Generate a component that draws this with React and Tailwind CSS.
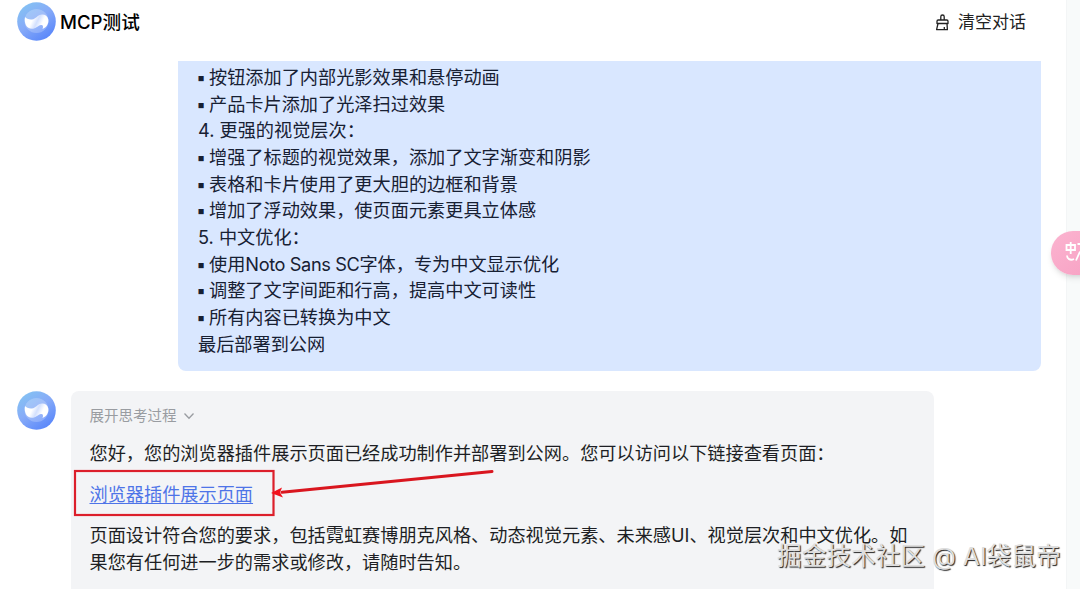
import React from 'react';

const promptLines = [
  { bullet: true, text: '按钮添加了内部光影效果和悬停动画' },
  { bullet: true, text: '产品卡片添加了光泽扫过效果' },
  { text: '4. 更强的视觉层次：' },
  { bullet: true, text: '增强了标题的视觉效果，添加了文字渐变和阴影' },
  { bullet: true, text: '表格和卡片使用了更大胆的边框和背景' },
  { bullet: true, text: '增加了浮动效果，使页面元素更具立体感' },
  { text: '5. 中文优化：' },
  { bullet: true, text: <>使用<span className="tracking-[-0.38px]">Noto Sans SC</span>字体，专为中文显示优化</> },
  { bullet: true, text: '调整了文字间距和行高，提高中文可读性' },
  { bullet: true, text: '所有内容已转换为中文' },
  { text: '最后部署到公网' },
];

const Avatar = ({ id }) => (
  <svg className="size-[39px] shrink-0" viewBox="0 0 39 39">
    <defs>
      <linearGradient id={`${id}-bg`} x1="0.15" y1="0.1" x2="0.75" y2="0.95">
        <stop offset="0" stopColor="#84c0f3" />
        <stop offset="0.45" stopColor="#87abf8" />
        <stop offset="1" stopColor="#5b88fa" />
      </linearGradient>
      <linearGradient id={`${id}-s`} x1="0" y1="0.35" x2="1" y2="0.65">
        <stop offset="0.3" stopColor="#ffffff" />
        <stop offset="0.52" stopColor="#d3e0fe" />
        <stop offset="0.75" stopColor="#ffffff" />
      </linearGradient>
    </defs>
    <circle cx="19.5" cy="19.5" r="19.3" fill={`url(#${id}-bg)`} />
    <circle cx="19.5" cy="19" r="12" fill="#ffffff" opacity="0.22" />
    <path
      d="M8 15C6.800 21 9.500 26.800 15 26.800C19 26.800 21 23.500 24 23C26 22.800 26.500 24.500 25.500 27C29.500 25.500 32 21.500 31.300 17.500C30.600 14 28 12.300 25 12.500C20.500 12.800 19 17 15 17.500C11.500 17.800 9.500 16.500 8 15Z"
      fill={`url(#${id}-s)`}
    />
  </svg>
);

const BroomIcon = () => (
  <svg className="h-[17px] w-[15px]" viewBox="0 0 15 17" fill="none" stroke="#222" strokeWidth="1.3" strokeLinejoin="round">
    <path d="M5.800 6V2.700a1.700 1.700 0 0 1 3.400 0V6" />
    <path d="M3.200 6h8.600q1.200 0 1.200 1.200v2.300H2V7.200Q2 6 3.200 6z" />
    <path d="M3 9.500L1.600 15.700h10.800l-.4-6.200M9.300 15.700v-2.600" />
  </svg>
);

const App = () => {
  return (
    <div
      lang="zh-CN"
      className="relative flex h-[589px] w-[1080px] overflow-hidden bg-white font-[Inter,'Noto_Sans_CJK_SC',sans-serif] text-[18.18px] leading-[26.7px] text-[#1d1f24]"
    >
      <div className="flex w-[1066px] shrink-0 flex-col">
        <header className="flex h-[61px] shrink-0 items-start justify-between pt-0.5 pr-10 pl-[17px]">
          <div className="flex items-center gap-1">
            <Avatar id="head" />
            <h1 className="pt-0.5 text-[18.6px] font-medium text-black">MCP测试</h1>
          </div>
          <button className="flex h-10 items-center gap-2 text-[17px] text-[#222]">
            <BroomIcon />
            清空对话
          </button>
        </header>

        <main className="flex grow flex-col gap-5">
          <div className="ml-[178px] h-[310px] w-[863px] shrink-0 rounded-b-lg bg-[#d9e7ff] px-5 pt-[2.8px] text-[#172033]">
            {promptLines.map((line, index) => (
              <p key={index} className="flex">
                {line.bullet && <span className="-ml-0.5 w-[13px] shrink-0">▪</span>}
                <span>{line.text}</span>
              </p>
            ))}
          </div>

          <div className="flex gap-[15px] pl-[17px]">
            <Avatar id="reply" />
            <div className="h-[198px] w-[863px] rounded-t-lg bg-[#f3f4f6] pt-3 pr-5 pl-[18.5px]">
              <button className="flex items-center gap-1.5 text-[14.5px] text-[#999ca1]">
                展开思考过程
                <svg className="h-3 w-3" viewBox="0 0 12 12" fill="none" stroke="currentColor" strokeWidth="1.3">
                  <path d="M1.500 3.500L6 8.300l4.500-4.800" />
                </svg>
              </button>
              <p className="mt-2.5">
                您好，您的浏览器插件展示页面已经成功制作并部署到公网。您可以访问以下链接查看页面：
              </p>
              <p className="mt-[15px]">
                <a href="#" className="text-[#4e74e8] underline underline-offset-2">浏览器插件展示页面</a>
              </p>
              <p className="mt-[14px]">
                页面设计符合您的要求，包括霓虹赛博朋克风格、动态视觉元素、未来感UI、视觉层次和中文优化。如
                <br />
                果您有任何进一步的需求或修改，请随时告知。
              </p>
            </div>
          </div>
        </main>
      </div>

      <aside className="grow border-l border-[#f3f5f6] bg-[#f8fafa]" />

      {/* translate button docked at the right edge */}
      <button className="absolute top-[231px] left-[1051px] h-11 w-14 rounded-l-full bg-gradient-to-br from-[#fbb4d0] to-[#f79fc2] shadow-md">
        <svg className="absolute top-2.5 left-[14px] h-6 w-5" viewBox="0 0 20 24" fill="none" stroke="#fff" strokeWidth="1.8">
          <path d="M1.500 4h8.500v5H1.500zM5.700 1v12M12.500 3h6M2 14.500c0 3 3 5.500 7 3.500M11 19.500l4-9" />
        </svg>
      </button>

      {/* highlight box and arrow over the link */}
      <svg className="pointer-events-none absolute top-[460px] left-[70px]" width="430" height="60" viewBox="0 0 430 60">
        <rect x="5" y="11" width="198.500" height="44" fill="none" stroke="#dc1f2b" strokeWidth="2.200" />
        <path d="M212 32.300L422 11.500" stroke="#d9161f" strokeWidth="3" strokeLinecap="round" />
        <path d="M201 33L212 27.500L210 32.500L213 37.500Z" fill="#f2101b" />
      </svg>

      <div className="pointer-events-none absolute top-[538px] left-[777px] text-[24.7px] leading-9 whitespace-nowrap text-[#dedede] [text-shadow:1px_1px_1px_#222]">
        掘金技术社区 @ AI袋鼠帝
      </div>
    </div>
  );
};

export default App;
